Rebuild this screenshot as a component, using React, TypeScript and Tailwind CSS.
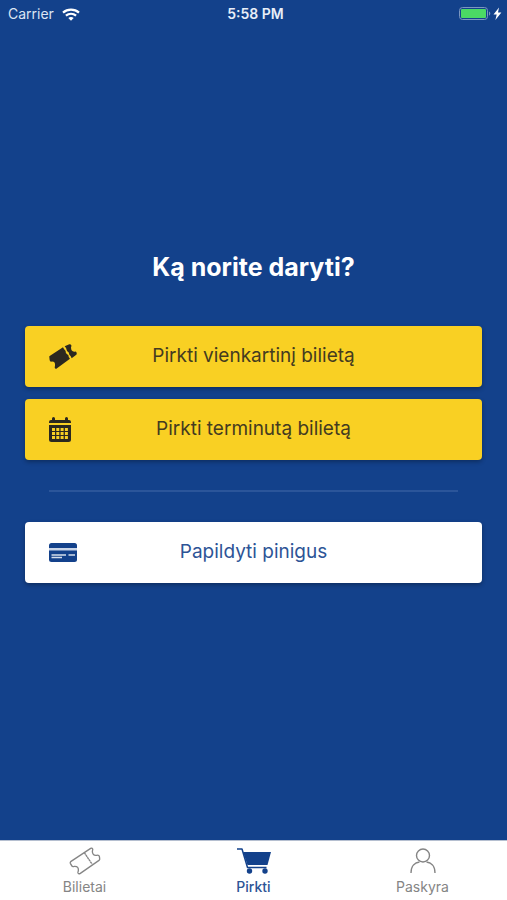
import type { ReactNode } from "react";

function WifiIcon() {
  return (
    <svg width="18" height="13" viewBox="0 0 18 13" fill="none" stroke="#fff" strokeWidth="2.2" aria-hidden="true">
      <path d="M1 4.6C5.5.6 12.5.6 17 4.6" />
      <path d="M3.9 7.7c3-2.6 7.2-2.6 10.2 0" />
      <path d="M6.3 10.1c1.6-1.4 3.8-1.4 5.4 0L9 12.8z" fill="#fff" stroke="none" />
    </svg>
  );
}

function BatteryIcon() {
  return (
    <svg width="44" height="14" viewBox="0 0 44 14" aria-hidden="true">
      <rect x="0.5" y="0.5" width="28" height="12" rx="3" fill="none" stroke="#7c96bf" />
      <rect x="2" y="2" width="25" height="9" rx="1" fill="#4bd964" />
      <path d="M30 4.500c1.800.7 1.800 3.500 0 4.200z" fill="#7c96bf" />
      <path d="M40 .5 34.500 7.500h3.200L36.400 13l6-7.500h-3.400z" fill="#fff" />
    </svg>
  );
}

function TicketSolid() {
  return (
    <svg width="28" height="26" viewBox="0 0 84 78" fill="#2b2820" aria-hidden="true">
      <path d="M2 36 42 10q3 7 8 11-1 8 8 12 0 6 5 11L24 73q-3 3-6 0-2-3 0-7 2-15-12-13-3 0-4-4L1 40q-1-3 1-4z" />
      <path d="M47 7 61 1q4-1 6 3 1 3-1 6 0 14 11 13 4-1 6 3 1 4-1 6L68 43q-2-7-7-11 0-8-7-11-1-9-7-14z" />
    </svg>
  );
}

function CalendarSolid() {
  return (
    <svg width="22" height="25" viewBox="0 0 22 25" fill="#2b2820" aria-hidden="true">
      <path d="M0 6V5q0-2 2-2h1V1.500Q3 0 4.500 0T6 1.500V3h10V1.500Q16 0 17.500 0T19 1.500V3h1q2 0 2 2v1z" />
      <path d="M0 8h22v14.500q0 2.500-2.500 2.500h-17Q0 25 0 22.500z" />
      <path
        d="M3 12.500h16M3 16.500h16M3 20.500h16"
        stroke="#f9d023"
        strokeWidth="2.800"
        strokeDasharray="3 1.300"
      />
    </svg>
  );
}

function CardSolid() {
  return (
    <svg width="28" height="19" viewBox="0 0 28 19" aria-hidden="true">
      <rect width="28" height="19" rx="2.5" fill="#13418b" />
      <path d="M0 5h28v2.500H0z" fill="#c9d5e8" />
      <path d="M2.500 12H17M19.500 12H26M2.500 14.500H13" stroke="#d5deec" strokeWidth="1.500" />
    </svg>
  );
}

function TicketOutline() {
  return (
    <svg width="32" height="28" viewBox="0 0 96 84" fill="none" stroke="#858585" strokeWidth="4" strokeLinejoin="round" aria-hidden="true">
      <path d="M5 44 65 4q4-2 6 2 1 3-1 6 0 15 13 13 6-2 8 3l1 6q1 4-2 6L34 79q-5 3-7-1-1-3 1-6 2-15-12-14-6 2-8-2l-4-7q-1-3 1-5z" />
      <path d="m46 17 23 34" strokeDasharray="7 1" />
    </svg>
  );
}

function CartSolid() {
  return (
    <svg width="36" height="28" viewBox="0 0 36 28" fill="none" stroke="#13418b" aria-hidden="true">
      <path d="M1 2h5l5.500 18.500h19" strokeWidth="1.500" strokeLinejoin="round" />
      <path d="M7 5h28l-3.500 13h-20z" fill="#13418b" stroke="none" />
      <circle cx="13.500" cy="24" r="2.700" fill="#13418b" stroke="none" />
      <circle cx="29" cy="24" r="2.700" fill="#13418b" stroke="none" />
    </svg>
  );
}

function PersonOutline() {
  return (
    <svg width="26" height="26" viewBox="0 0 26 26" fill="none" stroke="#858585" strokeWidth="1.400" aria-hidden="true">
      <circle cx="13" cy="7.500" r="6.500" />
      <path d="M1 25c0-7 4-10.500 8.500-11M16.500 14C21 14.500 25 18 25 25" />
    </svg>
  );
}

function ActionButton({ icon, label, className }: { icon: ReactNode; label: string; className: string }) {
  return (
    <button
      type="button"
      className={`grid h-[61px] w-full grid-cols-[32px_1fr_32px] items-center rounded px-6 text-[19px] shadow-[0_2px_4px_rgba(0,0,0,0.3)] ${className}`}
    >
      {icon}
      <span className="whitespace-nowrap text-center">{label}</span>
    </button>
  );
}

function Tab({ icon, label, className }: { icon: ReactNode; label: string; className: string }) {
  return (
    <a href="#" className={`flex flex-1 flex-col items-center pt-1 text-sm ${className}`}>
      <span className="flex h-8 items-center">{icon}</span>
      {label}
    </a>
  );
}

export default function App() {
  return (
    <div className="flex min-h-screen flex-col bg-[#13418b] font-['Inter','Liberation_Sans',sans-serif]">
      <header className="grid h-7 grid-cols-3 items-center pl-2 pr-1 text-sm text-white">
        <div className="flex items-center gap-2 text-[#dce5f3]">
          Carrier
          <WifiIcon />
        </div>
        <div className="text-center font-semibold text-[#e8eef8]">5:58 PM</div>
        <div className="flex justify-end">
          <BatteryIcon />
        </div>
      </header>

      <main className="flex flex-1 flex-col justify-center px-[25px] pb-[34px]">
        <h1 className="mb-[43px] text-center text-[25px] font-bold leading-8 text-white">Ką norite daryti?</h1>
        <div className="flex flex-col gap-3">
          <ActionButton icon={<TicketSolid />} label="Pirkti vienkartinį bilietą" className="bg-[#f9d023] text-[#443b20]" />
          <ActionButton icon={<CalendarSolid />} label="Pirkti terminutą bilietą" className="bg-[#f9d023] text-[#443b20]" />
        </div>
        <hr className="mx-6 my-[30px] border-t-2 border-[#2b559a]" />
        <ActionButton icon={<CardSolid />} label="Papildyti pinigus" className="bg-white text-[#2d5496]" />
      </main>

      <nav className="flex h-[60px] border-t border-[#b5bfd0] bg-white">
        <Tab icon={<TicketOutline />} label="Bilietai" className="text-[#858585]" />
        <Tab icon={<CartSolid />} label="Pirkti" className="font-medium text-[#2d5496]" />
        <Tab icon={<PersonOutline />} label="Paskyra" className="text-[#858585]" />
      </nav>
    </div>
  );
}
